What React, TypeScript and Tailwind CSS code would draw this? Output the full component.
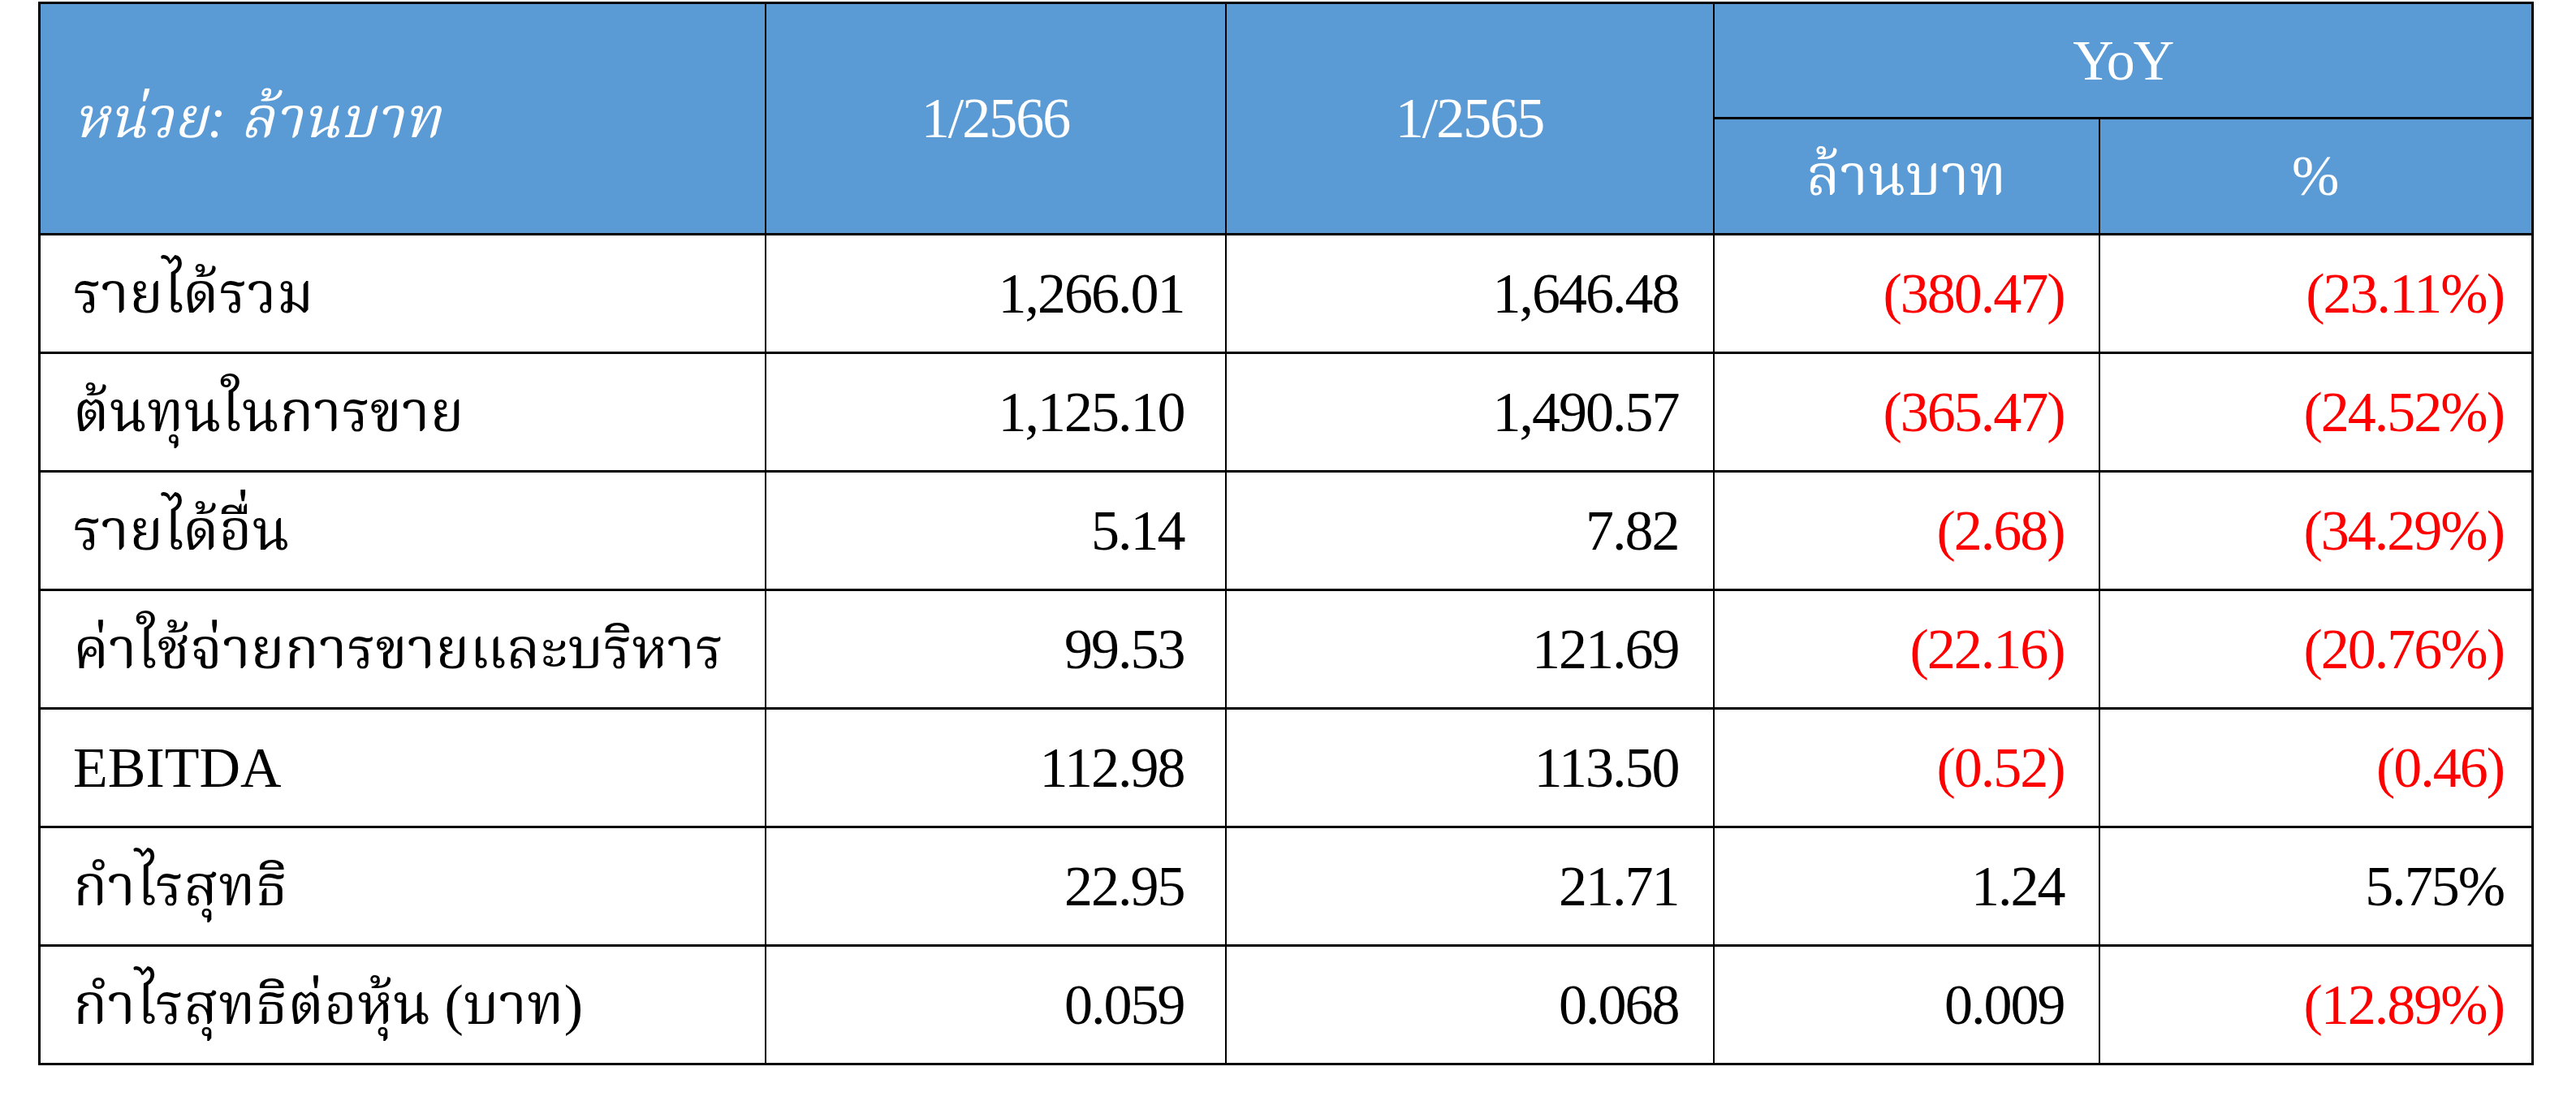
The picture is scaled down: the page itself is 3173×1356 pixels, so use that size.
const rows = [
  { label: "รายได้รวม", a: "1,266.01", b: "1,646.48", c: "(380.47)", d: "(23.11%)", cRed: true, dRed: true },
  { label: "ต้นทุนในการขาย", a: "1,125.10", b: "1,490.57", c: "(365.47)", d: "(24.52%)", cRed: true, dRed: true },
  { label: "รายได้อื่น", a: "5.14", b: "7.82", c: "(2.68)", d: "(34.29%)", cRed: true, dRed: true },
  { label: "ค่าใช้จ่ายการขายและบริหาร", a: "99.53", b: "121.69", c: "(22.16)", d: "(20.76%)", cRed: true, dRed: true },
  { label: "EBITDA", a: "112.98", b: "113.50", c: "(0.52)", d: "(0.46)", cRed: true, dRed: true },
  { label: "กำไรสุทธิ", a: "22.95", b: "21.71", c: "1.24", d: "5.75%", cRed: false, dRed: false },
  { label: "กำไรสุทธิต่อหุ้น (บาท)", a: "0.059", b: "0.068", c: "0.009", d: "(12.89%)", cRed: false, dRed: true },
];

const font = "font-['Liberation_Serif','Noto_Serif_Thai','Noto_Sans_Thai','Garuda',serif]";

export default function App() {
  return (
    <div className={`min-h-[1356px] w-[3173px] bg-white pl-[47px] pt-[2px] ${font}`}>
      <table className="table-fixed border-collapse border-[3px] border-black text-[70px] leading-none">
        <colgroup>
          <col className="w-[894px]" />
          <col className="w-[567px]" />
          <col className="w-[601px]" />
          <col className="w-[475px]" />
          <col className="w-[534px]" />
        </colgroup>
        <thead className="bg-[#5b9bd5] text-white font-normal">
          <tr className="h-[142px]">
            <th rowSpan={2} className="border-[3px] border-black border-r-2 pl-[40px] text-left font-normal italic">
              หน่วย: ล้านบาท
            </th>
            <th rowSpan={2} className="border-[3px] border-black border-x-2 font-normal tracking-[-2px]">
              1/2566
            </th>
            <th rowSpan={2} className="border-[3px] border-black border-x-2 font-normal tracking-[-2px]">
              1/2565
            </th>
            <th colSpan={2} className="border-[3px] border-black border-l-2 font-normal tracking-[-2px]">
              YoY
            </th>
          </tr>
          <tr className="h-[143px]">
            <th className="border-[3px] border-black border-x-2 font-normal">ล้านบาท</th>
            <th className="border-[3px] border-black border-l-2 font-normal">%</th>
          </tr>
        </thead>
        <tbody className="text-black">
          {rows.map((r) => (
            <tr key={r.label} className="h-[146px]">
              <td className="border-[3px] border-black border-r-2 pl-[40px] text-left">{r.label}</td>
              <td className="border-[3px] border-black border-x-2 pr-[50px] text-right tracking-[-2px]">{r.a}</td>
              <td className="border-[3px] border-black border-x-2 pr-[42px] text-right tracking-[-2px]">{r.b}</td>
              <td className={`border-[3px] border-black border-x-2 pr-[42px] text-right tracking-[-2px] ${r.cRed ? "text-[#ff0000]" : ""}`}>
                {r.c}
              </td>
              <td className={`border-[3px] border-black border-l-2 pr-[34px] text-right tracking-[-2px] ${r.dRed ? "text-[#ff0000]" : ""}`}>
                {r.d}
              </td>
            </tr>
          ))}
        </tbody>
      </table>
    </div>
  );
}
